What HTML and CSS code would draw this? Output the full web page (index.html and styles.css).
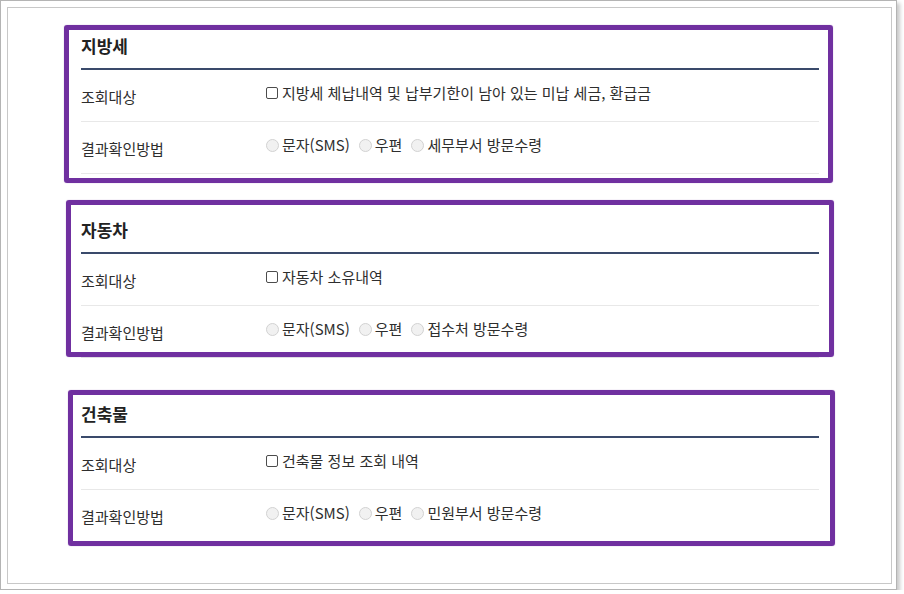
FILE: index.html
```html
<!DOCTYPE html>
<html lang="ko">

<head>
    <meta charset="UTF-8">
    <meta name="viewport" content="width=device-width, initial-scale=1.0">
    <title>조회대상 선택</title>
    <link rel="stylesheet" href="styles.css">
</head>

<body>
    <div class="frame">
        <div class="panel">
            <!-- 지방세 -->
            <section class="sect">
                <h4 class="sect-title">지방세</h4>
                <div class="row">
                    <div class="row-label">조회대상</div>
                    <div class="row-value">
                        <label class="opt"><input type="checkbox" class="chk">지방세 체납내역 및 납부기한이 남아 있는 미납 세금, 환급금</label>
                    </div>
                </div>
                <div class="row">
                    <div class="row-label">결과확인방법</div>
                    <div class="row-value">
                        <label class="opt"><input type="radio" name="r1" class="rad" disabled>문자(SMS)</label>
                        <label class="opt"><input type="radio" name="r1" class="rad" disabled>우편</label>
                        <label class="opt"><input type="radio" name="r1" class="rad" disabled>세무부서 방문수령</label>
                    </div>
                </div>
                <div class="mark mark-1"></div>
            </section>

            <!-- 자동차 -->
            <section class="sect">
                <h4 class="sect-title">자동차</h4>
                <div class="row">
                    <div class="row-label">조회대상</div>
                    <div class="row-value">
                        <label class="opt"><input type="checkbox" class="chk">자동차 소유내역</label>
                    </div>
                </div>
                <div class="row">
                    <div class="row-label">결과확인방법</div>
                    <div class="row-value">
                        <label class="opt"><input type="radio" name="r2" class="rad" disabled>문자(SMS)</label>
                        <label class="opt"><input type="radio" name="r2" class="rad" disabled>우편</label>
                        <label class="opt"><input type="radio" name="r2" class="rad" disabled>접수처 방문수령</label>
                    </div>
                </div>
                <div class="mark mark-2"></div>
            </section>

            <!-- 건축물 -->
            <section class="sect">
                <h4 class="sect-title">건축물</h4>
                <div class="row">
                    <div class="row-label">조회대상</div>
                    <div class="row-value">
                        <label class="opt"><input type="checkbox" class="chk">건축물 정보 조회 내역</label>
                    </div>
                </div>
                <div class="row">
                    <div class="row-label">결과확인방법</div>
                    <div class="row-value">
                        <label class="opt"><input type="radio" name="r3" class="rad" disabled>문자(SMS)</label>
                        <label class="opt"><input type="radio" name="r3" class="rad" disabled>우편</label>
                        <label class="opt"><input type="radio" name="r3" class="rad" disabled>민원부서 방문수령</label>
                    </div>
                </div>
                <div class="mark mark-3"></div>
            </section>
        </div>
    </div>
</body>

</html>
```

FILE: styles.css
```css
* {
    box-sizing: border-box;
}

body {
    margin: 0;
    background: #ffffff;
    font-family: "Noto Sans CJK KR", "Noto Sans", sans-serif;
    color: #2e2e2e;
    font-size: 15px;
}

.frame {
    width: 897px;
    height: 590px;
    border: 1px solid #b4b4b4;
    padding: 6px 4px 5px 6px;
    box-shadow: 3px 3px 4px rgba(0, 0, 0, 0.22);
    background: #ffffff;
}

.panel {
    height: 100%;
    border: 1px solid #c8c8c8;
    padding: 26px 72px 0 73px;
}

.sect {
    position: relative;
    margin-bottom: 44px;
}

.sect-title {
    margin: 0;
    font-size: 17px;
    font-weight: bold;
    line-height: 24px;
    padding-bottom: 10px;
    color: #222222;
    border-bottom: 2px solid #3a4a6b;
}

.row {
    display: flex;
    height: 52px;
    border-bottom: 1px solid #e8e8e8;
}

.row-label {
    width: 181px;
    padding-top: 17px;
    line-height: 20px;
}

.row-value {
    display: flex;
    align-items: flex-start;
    padding-top: 13px;
    line-height: 20px;
}

.opt {
    display: flex;
    align-items: center;
    margin-right: 5px;
}

.chk {
    appearance: none;
    width: 12px;
    height: 12px;
    margin: 0 4px 0 4px;
    border: 1px solid #4c4c4c;
    border-radius: 2px;
    background: #ffffff;
}

.rad {
    appearance: none;
    width: 13px;
    height: 13px;
    margin: 0 3px 0 4px;
    border: 1px solid #d2d2d2;
    border-radius: 50%;
    background: #f1f1f1;
}

/* 보라색 강조 테두리 */
.mark {
    position: absolute;
    border: 5px solid #7030a0;
    border-radius: 3px;
    box-shadow: 0 0 1px rgba(112, 48, 160, 0.6);
    pointer-events: none;
}

.mark-1 {
    top: -9px;
    left: -17px;
    right: -14px;
    bottom: -9px;
}

.mark-2 {
    top: -18px;
    left: -15px;
    right: -15px;
    bottom: 1px;
}

.mark-3 {
    top: -12px;
    left: -13px;
    right: -16px;
    bottom: -4px;
}
```
